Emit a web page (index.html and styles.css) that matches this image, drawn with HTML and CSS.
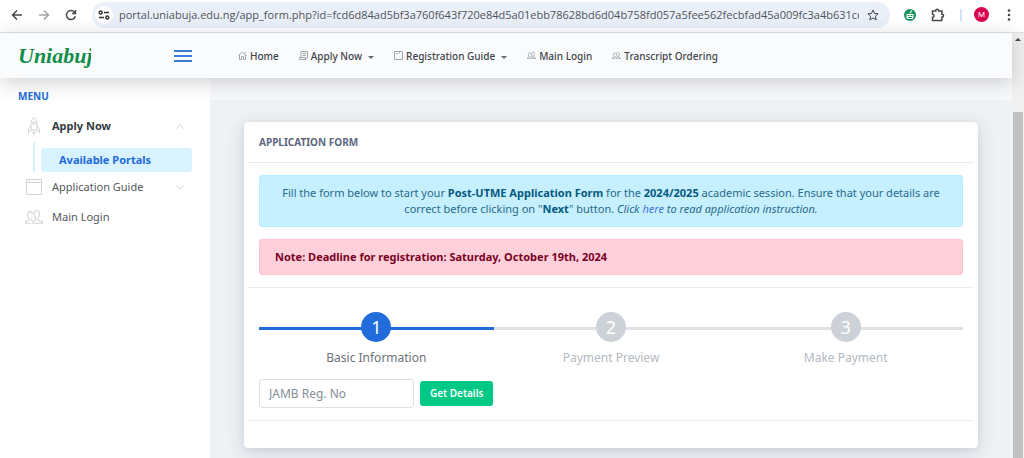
FILE: index.html
```html
<!DOCTYPE html>
<html lang="en">
<head>
<meta charset="utf-8">
<title>Application Form</title>
<link rel="stylesheet" href="styles.css">
</head>
<body>
<svg class="defs" aria-hidden="true">
  <symbol id="users" viewBox="0 0 16 14"><path d="M7 12.5V11l2.5-1.2V8C8.400 7 8 5.800 8 4.200 8 2.300 9 1.200 10.500 1.200S13 2.300 13 4.200c0 1.600-.4 2.800-1.500 3.800v1.800l4 1.500v1.200zM5 12.500H.5V11l3-1.200V8.200C2.600 7.400 2.200 6.300 2.200 5c0-1.800 1-2.800 2.300-2.800C5.600 2.200 6.500 3 6.700 4.200M5.500 8v1.800l1 .5" fill="none" stroke="currentColor"/></symbol>
</svg>
<div class="browser">
  <header class="toolbar">
    <button class="tool" aria-label="Back"><svg width="12" height="12" viewBox="0 0 12 12"><path d="M11 6H1.500M6 1.500 1.500 6 6 10.500"/></svg></button>
    <button class="tool tool-off" aria-label="Forward"><svg width="12" height="12" viewBox="0 0 12 12"><path d="M1 6h9.500M6 1.500 10.500 6 6 10.500"/></svg></button>
    <button class="tool" aria-label="Reload"><svg width="12" height="12" viewBox="0 0 12 12"><path d="M10.300 7.200A4.500 4.500 0 1 1 9.500 3.200L10.500 4.500M10.500 1v3.500H7"/></svg></button>
    <div class="address">
      <button class="site-info" aria-label="Site information"><svg width="12" height="10" viewBox="0 0 12 10"><circle cx="2.700" cy="2.500" r="1.500"/><path d="M6 2.500h5M1 7.500h5"/><circle cx="9.300" cy="7.500" r="1.500"/></svg></button>
      <input class="url" aria-label="Address" value="portal.uniabuja.edu.ng/app_form.php?id=fcd6d84ad5bf3a760f643f720e84d5a01ebb78628bd6d04b758fd057a5fee562fecbfad45a009fc3a4b631cdab9f75c0118...">
      <button class="star" aria-label="Bookmark"><svg width="12" height="12" viewBox="0 0 12 12"><path d="m6 1 1.500 3.400 3.600.4-2.700 2.400.8 3.600L6 9l-3.200 1.800.8-3.600L.9 4.800l3.600-.4z"/></svg></button>
    </div>
    <button class="tool ext" aria-label="Extension"><svg width="12" height="12" viewBox="0 0 12 12"><circle cx="6" cy="6" r="6" class="green"/><path class="white" d="M2.500 5h7v3.500q0 1.500-1.500 1.500H4Q2.500 10 2.500 8.500zM5.300 4.200 7.500 1.200l.8.6-1.800 2.600z"/><path class="green" d="M3.500 6h2v1h-2zM6.500 6h2v1h-2zM4 8h4v1H4z"/></svg></button>
    <button class="tool puzzle" aria-label="Extensions"><svg width="14" height="14" viewBox="0 0 14 14"><path d="M1.500 3h3.200c0-2.200 3-2.200 3 0h3.200v3.200c2.200 0 2.200 3 0 3v3.300H1.500V9.400c2.200-.2 2.200-3 0-3.200z"/></svg></button>
    <span class="tool-line"></span>
    <button class="profile" aria-label="Profile">M</button>
    <button class="tool" aria-label="More"><svg width="4" height="12" viewBox="0 0 4 12"><g class="dots"><circle cx="2" cy="1.500" r="1.300"/><circle cx="2" cy="6" r="1.300"/><circle cx="2" cy="10.500" r="1.300"/></g></svg></button>
  </header>
  <div class="viewport">
    <div class="site">
      <div class="topbar">
        <div class="brand">
          <a href="#" class="logo">Uniabuja</a>
          <button class="burger" aria-label="Toggle menu"><span></span><span></span><span></span></button>
        </div>
        <nav class="topnav" aria-label="Main">
          <a href="#"><svg width="9" height="9" viewBox="0 0 9 9"><path d="M.5 4.500 4.500 1l4 3.500M1.500 4v4.500h2V5.500h2v3h2V4M7 1v1.500"/></svg>Home</a>
          <a href="#"><svg width="9" height="9" viewBox="0 0 9 9"><path d="M2 .5h6.500v6.500L7 8.500H.5V6.500h6V8M2 .5v6M3.500 2.500h3.500M3.500 4.500h3.500"/></svg>Apply Now<i class="caret"></i></a>
          <a href="#"><svg width="9" height="9" viewBox="0 0 9 9"><path d="M.5.5h8v8h-8zM2 2.500h2M5.500.5v2"/></svg>Registration Guide<i class="caret"></i></a>
          <a href="#"><svg width="9" height="9" viewBox="0 0 16 14" class="wide"><use href="#users"/></svg>Main Login</a>
          <a href="#"><svg width="9" height="9" viewBox="0 0 16 14" class="wide"><use href="#users"/></svg>Transcript Ordering</a>
        </nav>
      </div>
      <div class="columns">
        <nav class="sidebar" aria-label="Menu">
          <h2>MENU</h2>
          <a href="#" class="item open"><svg width="18" height="18" viewBox="0 0 18 18"><path d="M6 13V5.500C6 3 8 1 9 .5 10 1 12 3 12 5.500V13zM6 9l-2.500 3v3.500L6 13.500M12 9l2.500 3v3.500L12 13.500M7.500 15h3L9 17.500z"/><circle cx="9" cy="6" r="1.500"/></svg><span>Apply Now</span><svg class="chev" width="8" height="5" viewBox="0 0 8 5"><path d="m.5 4.500 3.500-4 3.500 4"/></svg></a>
          <div class="sub"><a href="#">Available Portals</a></div>
          <a href="#" class="item"><svg width="18" height="18" viewBox="0 0 18 18"><path d="M1.500 1.500h15v15h-15zM1.500 4.500h15M3 3h2"/></svg><span>Application Guide</span><svg class="chev" width="8" height="5" viewBox="0 0 8 5"><path d="m.5.5 3.500 4 3.500-4"/></svg></a>
          <a href="#" class="item"><svg width="18" height="16" viewBox="0 0 16 14"><use href="#users"/></svg><span>Main Login</span></a>
        </nav>
        <main class="content">
          <div class="strip"></div>
          <section class="card">
            <h1>APPLICATION FORM</h1>
            <div class="body">
              <p class="alert info">Fill the form below to start your <b>Post-UTME Application Form</b> for the <b>2024/2025</b> academic session. Ensure that your details are correct before clicking on "<b>Next</b>" button. <i>Click <a href="#">here</a> to read application instruction.</i></p>
              <p class="alert danger">Note: Deadline for registration: Saturday, October 19th, 2024</p>
            </div>
            <div class="body form">
              <ol class="steps">
                <li class="active"><span class="num">1</span>Basic Information</li>
                <li><span class="num">2</span>Payment Preview</li>
                <li><span class="num">3</span>Make Payment</li>
              </ol>
              <form class="lookup">
                <input type="text" aria-label="JAMB Reg. No" placeholder="JAMB Reg. No">
                <button type="button">Get Details</button>
              </form>
            </div>
            <footer></footer>
          </section>
        </main>
      </div>
    </div>
    <div class="scrollbar"><span class="up"></span><span class="thumb"></span></div>
  </div>
</div>
</body>
</html>
```
FILE: styles.css
```css
* { box-sizing: border-box; }
body { margin: 0; font: 11px/16px "Noto Sans", "Open Sans", sans-serif; color: #495057; }
a { color: inherit; text-decoration: none; }
button { border: 0; padding: 0; background: none; font: inherit; }
svg { fill: none; stroke: currentColor; flex: none; overflow: visible; }
.defs { position: absolute; width: 0; height: 0; }
.browser { display: flex; flex-direction: column; height: 100vh; overflow: hidden; }

.toolbar { display: flex; align-items: center; flex: none; height: 33px; padding: 0 13px 3px 11px; background: #fff; border-bottom: 1px solid #dfe1e3; color: #46494c; }
.tool { display: flex; align-items: center; justify-content: center; width: 12px; margin-right: 15px; color: #46494c; }
.tool svg { stroke-width: 1.5; }
.tool:last-child { width: 4px; margin: 0; }
.tool-off { color: #a2a4a6; }
.address { display: flex; align-items: center; flex: 1; min-width: 0; height: 26px; margin-right: 14px; padding: 0 11px 0 3px; border-radius: 13px; background: #e9f0f9; }
.site-info { display: flex; align-items: center; justify-content: center; flex: none; width: 18px; height: 18px; border-radius: 50%; background: #fff; color: #333; }
.site-info svg { stroke-width: 1.4; }
.url { flex: 1; min-width: 0; margin-left: 6px; padding: 0; border: 0; background: none; font: 11px/16px "Open Sans", sans-serif; color: #50545a; }
.star { display: flex; margin-left: 8px; color: #444; }
.green { fill: #16945a; stroke: none; }
.white { fill: #fff; stroke: none; }
.puzzle { width: 14px; }
.tool-line { width: 2px; height: 12px; margin-right: 12px; background: #d3e3fa; }
.profile { width: 15px; height: 15px; margin-right: 18px; border-radius: 50%; background: #d8004f; color: #fff; font: 8px/15px Roboto, sans-serif; }
.dots { fill: currentColor; stroke: none; }

.viewport { display: flex; flex: 1; min-height: 0; }
.site { display: flex; flex-direction: column; flex: 1; min-width: 0; }
.topbar { display: flex; flex: none; height: 45px; background: #fafbfc; box-shadow: 0 4px 20px rgba(40, 45, 55, .22); position: relative; z-index: 1; }
.brand { display: flex; align-items: center; justify-content: space-between; flex: none; width: 210px; padding: 0 18px; }
.logo { width: 73px; overflow: hidden; color: #118e4b; font: italic bold 22px/28px "Brush Script MT", "Liberation Serif", serif; }
.burger { display: flex; flex-direction: column; gap: 3px; width: 18px; }
.burger span { height: 2px; background: #3c7bdd; }
.topnav { display: flex; align-items: center; gap: 20px; padding-left: 28px; font: 500 10px/16px "Noto Sans", sans-serif; color: #3f454b; white-space: nowrap; }
.topnav a { display: flex; align-items: center; }
.topnav svg { margin-right: 3px; color: #a4a7aa; }
.topnav .wide { stroke-width: 1.5; }
.caret { margin: 3px 0 0 6px; border: 3px solid transparent; border-top-color: #656a70; border-bottom: 0; }

.columns { display: flex; flex: 1; min-height: 0; }
.sidebar { flex: none; width: 210px; padding: 10px 18px 0; background: #fff; }
.sidebar h2 { margin: 0 0 6px; color: #216bdb; font-size: 10px; line-height: 16px; }
.item { display: flex; align-items: center; height: 30px; padding: 0 8px 0 7px; color: #53575b; }
.item svg { width: 18px; margin-right: 9px; color: #d2d4d6; }
.item span { flex: 1; }
.item .chev { width: 8px; margin: 0; }
.open { height: 32px; font-weight: bold; color: #343a40; }
.sub { margin: 0 0 0 15px; padding: 6px 0 0 6px; border-left: 2px solid #d9f2ff; }
.sub a { display: block; padding: 4px 18px; border-radius: 3px; background: #d9f2ff; color: #216bdb; font-weight: bold; }

.content { flex: 1; min-width: 0; background: #eef2f5; }
.strip { height: 22px; background: #f7f8fa; }
.card { margin: 22px 34px 0; padding: 0 4px; border-radius: 4px; background: #fff; box-shadow: 0 5px 20px rgba(30, 45, 80, .14), 0 1px 6px rgba(30, 45, 80, .08); }
.card h1 { margin: 0; padding: 12px 11px; border-bottom: 1px solid #e9ecef; color: #5b6780; font-size: 10px; line-height: 16px; }
.body { padding: 12px 11px; border-bottom: 1px solid #ececee; }
.alert { margin: 0; padding: 9px 15px; border: 1px solid; border-radius: 3px; line-height: 16px; }
.info { margin-bottom: 12px; border-color: #b5eaff; background: #c6efff; color: #286b8a; text-align: center; }
.info b { color: #055a80; }
.info a { color: #3d75df; }
.danger { border-color: #ffc2ce; background: #ffd0da; color: #790024; font-weight: bold; }
.form { padding-top: 24px; }
.steps { display: flex; margin: 0 0 12px; padding: 0; list-style: none; }
.steps li { display: flex; flex-direction: column; align-items: center; flex: 1; gap: 7px; color: #b3bac1; font-size: 12px; line-height: 18px; background: linear-gradient(#dee2e6, #dee2e6) 0 15px / 100% 3px no-repeat; }
.steps .active { color: #6c7279; background-image: linear-gradient(#216bdb, #216bdb); }
.num { width: 30px; height: 30px; border-radius: 50%; background: #ccd2d8; color: #fff; text-align: center; font-size: 18px; line-height: 31px; }
.active .num { background: #216bdb; }
.lookup { display: flex; align-items: center; gap: 6px; }
.lookup input { width: 155px; height: 29px; padding: 0 9px; border: 1px solid #dcdfe4; border-radius: 3px; font: 12px "Noto Sans", sans-serif; }
.lookup input::placeholder { color: #868e96; opacity: 1; }
.lookup button { padding: 4px 10px 5px; border-radius: 3px; background: #00c985; color: #fff; font-size: 10px; font-weight: 600; }
.card footer { height: 27px; }

.scrollbar { display: flex; flex-direction: column; align-items: center; flex: none; width: 12px; background: #f0f0f0; }
.up { margin: 5px 0 71px; border: 3px solid transparent; border-top: 0; border-bottom-color: #444; }
.thumb { flex: 1; width: 10px; background: #c1c1c1; }
```
